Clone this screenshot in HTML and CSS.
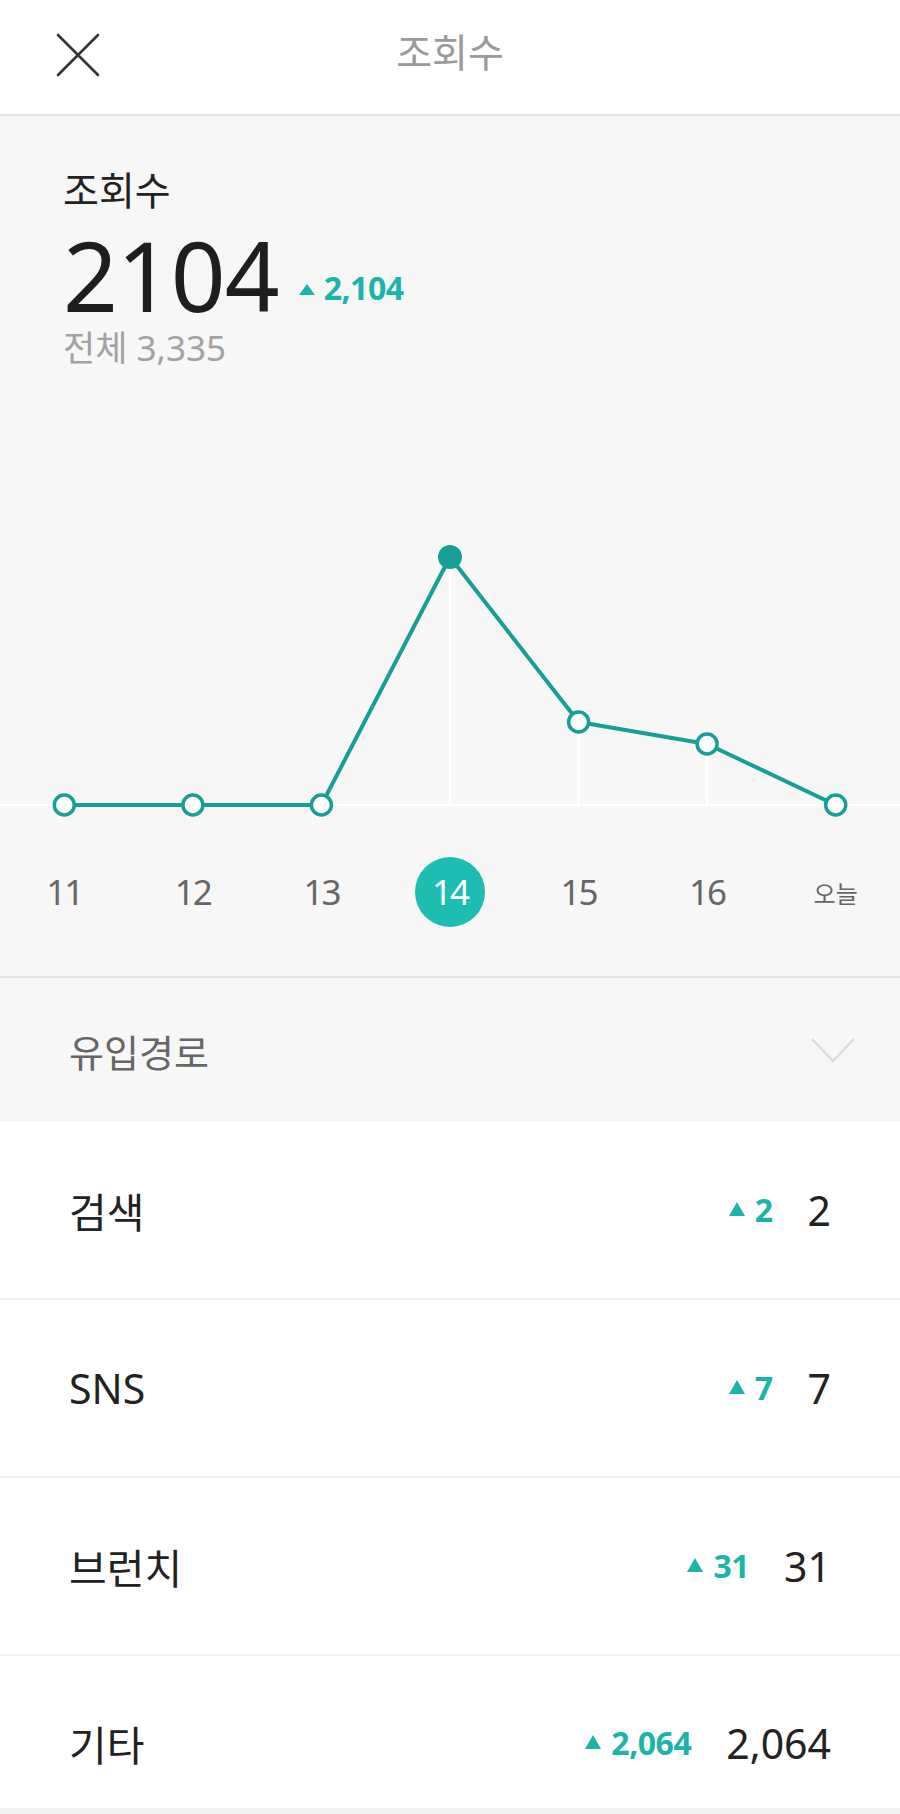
FILE: index.html
```html
<!DOCTYPE html>
<html lang="ko">
<head>
  <meta charset="UTF-8">
  <title>조회수</title>
  <link rel="stylesheet" href="styles.css">
</head>
<body>

  <header class="topbar">
    <button class="close" aria-label="닫기">
      <svg width="44" height="44" viewBox="0 0 44 44">
        <path d="M2 2 L42 42 M42 2 L2 42" stroke="#333" stroke-width="2.6" stroke-linecap="round" fill="none"/>
      </svg>
    </button>
    <h1 class="title">조회수</h1>
  </header>

  <section class="summary">
    <div class="label">조회수</div>
    <div class="total-row"><span class="total">2104</span><span class="delta"><i class="up"></i>2,104</span></div>
    <div class="all">전체 3,335</div>
  </section>

  <section class="chart">
    <svg width="900" height="460" viewBox="0 0 900 460">
      <line x1="0" y1="425" x2="900" y2="425" stroke="#fff" stroke-width="2"/>
      <line x1="450" y1="177" x2="450" y2="425" stroke="#fff" stroke-width="2"/>
      <line x1="578.6" y1="342" x2="578.6" y2="425" stroke="#fff" stroke-width="2"/>
      <line x1="707.1" y1="364" x2="707.1" y2="425" stroke="#fff" stroke-width="2"/>
      <polyline points="64.3,425 192.9,425 321.4,425 450,177 578.6,342 707.1,364 835.7,425"
        fill="none" stroke="#179f97" stroke-width="4" stroke-linejoin="round"/>
      <g fill="#fff" stroke="#179f97" stroke-width="3.5">
        <circle cx="64.3" cy="425" r="10"/>
        <circle cx="192.9" cy="425" r="10"/>
        <circle cx="321.4" cy="425" r="10"/>
        <circle cx="578.6" cy="342" r="10"/>
        <circle cx="707.1" cy="364" r="10"/>
        <circle cx="835.7" cy="425" r="10"/>
      </g>
      <circle cx="450" cy="177" r="12" fill="#179f97"/>
    </svg>

    <div class="days">
      <span>11</span>
      <span>12</span>
      <span>13</span>
      <span class="on">14</span>
      <span>15</span>
      <span>16</span>
      <span class="today">오늘</span>
    </div>
  </section>

  <div class="source">
    <span>유입경로</span>
    <svg width="46" height="26" viewBox="0 0 46 26">
      <path d="M2 2 L23 24 L44 2" stroke="#dcdcdc" stroke-width="2.4" fill="none"/>
    </svg>
  </div>

  <ul class="list">
    <li>
      <span class="name">검색</span>
      <span class="nums"><span class="delta small"><i class="up"></i>2</span><span class="val">2</span></span>
    </li>
    <li>
      <span class="name">SNS</span>
      <span class="nums"><span class="delta small"><i class="up"></i>7</span><span class="val">7</span></span>
    </li>
    <li>
      <span class="name">브런치</span>
      <span class="nums"><span class="delta small"><i class="up"></i>31</span><span class="val">31</span></span>
    </li>
    <li class="last">
      <span class="name">기타</span>
      <span class="nums"><span class="delta small"><i class="up"></i>2,064</span><span class="val">2,064</span></span>
    </li>
  </ul>

</body>
</html>
```

FILE: styles.css
```css
body {
  margin: 0;
  background-color: #f0f0f0;
  color: #222;
  font-family: 'Noto Sans', 'Noto Sans CJK KR', sans-serif;
}

.topbar {
  position: relative;
  height: 114px;
  background-color: #fff;
  border-bottom: 2px solid #e4e4e4;
  display: flex;
  align-items: center;
  justify-content: center;
}

.close {
  position: absolute;
  left: 56px;
  top: 33px;
  padding: 0;
  border: none;
  background: none;
  width: 44px;
  height: 44px;
}

.title {
  margin: 0;
  font-size: 39px;
  line-height: 44px;
  font-weight: 400;
  color: #9a9a9a;
  padding-bottom: 11px;
}

.summary {
  background-color: #f7f7f7;
  padding: 54px 0 0 63px;
  height: 210px;
}

.label {
  font-size: 39px;
  line-height: 40px;
  color: #222;
}

.total-row {
  margin-top: 17px;
  height: 96px;
  font-size: 96px;
  line-height: 96px;
}

.total {
  letter-spacing: -1px;
  color: #1e1e1e;
}

.delta {
  display: inline-block;
  color: #1cb3a9;
  font-weight: 700;
  font-size: 32px;
  line-height: 1;
  margin-left: 20px;
  letter-spacing: -0.5px;
  vertical-align: 12px;
}

.up {
  display: inline-block;
  width: 0;
  height: 0;
  border-left: 8px solid transparent;
  border-right: 8px solid transparent;
  border-bottom: 11px solid #1cb3a9;
  margin-right: 9px;
  vertical-align: 5px;
}

.all {
  font-size: 35px;
  line-height: 40px;
  color: #a2a2a2;
  margin-top: 5px;
}

.chart {
  background-color: #f7f7f7;
  padding-bottom: 32px;
  border-bottom: 2px solid #e2e2e2;
}

.chart svg {
  display: block;
}

.days {
  display: grid;
  grid-template-columns: repeat(7, 1fr);
  height: 104px;
  align-items: center;
  justify-items: center;
  font-size: 35px;
  letter-spacing: -2px;
  color: #666;
}

.days span {
  width: 70px;
  height: 70px;
  line-height: 70px;
  text-align: center;
  border-radius: 50%;
}

.days .on {
  background-color: #1dbdb2;
  color: #fff;
}

.days .today {
  font-size: 24px;
  letter-spacing: 0;
  padding-top: 4px;
}

.source {
  background-color: #f7f7f7;
  height: 144px;
  padding: 0 44px 0 69px;
  display: flex;
  align-items: center;
  justify-content: space-between;
  font-size: 38px;
  color: #666;
}

.list {
  list-style: none;
  margin: 0;
  padding: 0;
}

.list li {
  background-color: #fff;
  height: 176px;
  border-bottom: 2px solid #efefef;
  padding: 0 69px;
  display: flex;
  align-items: center;
  justify-content: space-between;
  font-size: 41px;
}

.list li.last {
  height: 130px;
  padding-top: 22px;
  border-bottom: none;
}

.nums {
  line-height: 48px;
}

.delta.small {
  font-size: 32px;
  margin-left: 0;
  margin-right: 35px;
  vertical-align: 4px;
}

.delta.small .up {
  border-left-width: 8px;
  border-right-width: 8px;
  border-bottom-width: 14px;
  margin-right: 10px;
  vertical-align: 6px;
}

.val {
  color: #222;
}
```
